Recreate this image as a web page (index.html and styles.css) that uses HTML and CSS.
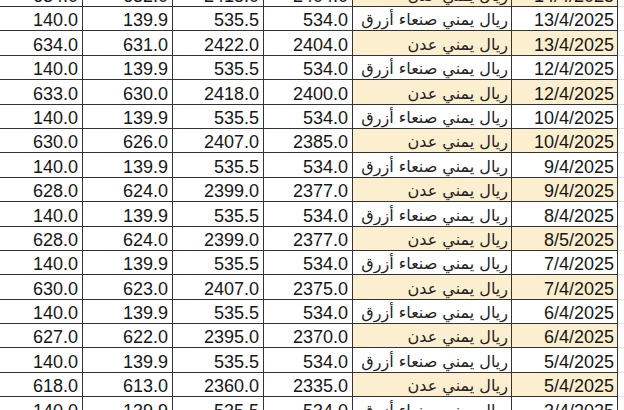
FILE: index.html
```html
<!DOCTYPE html>
<html lang="ar">
<head>
<meta charset="utf-8">
<title>أسعار الصرف</title>
<link rel="stylesheet" href="styles.css">
</head>
<body>
<table class="sheet" dir="ltr">
  <colgroup>
    <col class="c1"><col class="c2"><col class="c3"><col class="c4"><col class="c5"><col class="c6"><col class="c7">
  </colgroup>
  <tbody>
    <tr class="aden"><td>634.0</td><td>632.0</td><td>2418.0</td><td>2404.0</td><td class="cur">ريال يمني عدن</td><td class="date">14/4/2025</td><td class="empty"></td></tr>
    <tr><td>140.0</td><td>139.9</td><td>535.5</td><td>534.0</td><td class="cur">ريال يمني صنعاء أزرق</td><td class="date">13/4/2025</td><td class="empty"></td></tr>
    <tr class="aden"><td>634.0</td><td>631.0</td><td>2422.0</td><td>2404.0</td><td class="cur">ريال يمني عدن</td><td class="date">13/4/2025</td><td class="empty"></td></tr>
    <tr><td>140.0</td><td>139.9</td><td>535.5</td><td>534.0</td><td class="cur">ريال يمني صنعاء أزرق</td><td class="date">12/4/2025</td><td class="empty"></td></tr>
    <tr class="aden"><td>633.0</td><td>630.0</td><td>2418.0</td><td>2400.0</td><td class="cur">ريال يمني عدن</td><td class="date">12/4/2025</td><td class="empty"></td></tr>
    <tr><td>140.0</td><td>139.9</td><td>535.5</td><td>534.0</td><td class="cur">ريال يمني صنعاء أزرق</td><td class="date">10/4/2025</td><td class="empty"></td></tr>
    <tr class="aden"><td>630.0</td><td>626.0</td><td>2407.0</td><td>2385.0</td><td class="cur">ريال يمني عدن</td><td class="date">10/4/2025</td><td class="empty"></td></tr>
    <tr><td>140.0</td><td>139.9</td><td>535.5</td><td>534.0</td><td class="cur">ريال يمني صنعاء أزرق</td><td class="date">9/4/2025</td><td class="empty"></td></tr>
    <tr class="aden"><td>628.0</td><td>624.0</td><td>2399.0</td><td>2377.0</td><td class="cur">ريال يمني عدن</td><td class="date">9/4/2025</td><td class="empty"></td></tr>
    <tr><td>140.0</td><td>139.9</td><td>535.5</td><td>534.0</td><td class="cur">ريال يمني صنعاء أزرق</td><td class="date">8/4/2025</td><td class="empty"></td></tr>
    <tr class="aden"><td>628.0</td><td>624.0</td><td>2399.0</td><td>2377.0</td><td class="cur">ريال يمني عدن</td><td class="date">8/5/2025</td><td class="empty"></td></tr>
    <tr><td>140.0</td><td>139.9</td><td>535.5</td><td>534.0</td><td class="cur">ريال يمني صنعاء أزرق</td><td class="date">7/4/2025</td><td class="empty"></td></tr>
    <tr class="aden"><td>630.0</td><td>623.0</td><td>2407.0</td><td>2375.0</td><td class="cur">ريال يمني عدن</td><td class="date">7/4/2025</td><td class="empty"></td></tr>
    <tr><td>140.0</td><td>139.9</td><td>535.5</td><td>534.0</td><td class="cur">ريال يمني صنعاء أزرق</td><td class="date">6/4/2025</td><td class="empty"></td></tr>
    <tr class="aden"><td>627.0</td><td>622.0</td><td>2395.0</td><td>2370.0</td><td class="cur">ريال يمني عدن</td><td class="date">6/4/2025</td><td class="empty"></td></tr>
    <tr><td>140.0</td><td>139.9</td><td>535.5</td><td>534.0</td><td class="cur">ريال يمني صنعاء أزرق</td><td class="date">5/4/2025</td><td class="empty"></td></tr>
    <tr class="aden"><td>618.0</td><td>613.0</td><td>2360.0</td><td>2335.0</td><td class="cur">ريال يمني عدن</td><td class="date">5/4/2025</td><td class="empty"></td></tr>
    <tr><td>140.0</td><td>139.9</td><td>535.5</td><td>534.0</td><td class="cur">ريال يمني صنعاء أزرق</td><td class="date">3/4/2025</td><td class="empty"></td></tr>
  </tbody>
</table>
</body>
</html>
```

FILE: styles.css
```css
html, body {
  margin: 0;
  padding: 0;
  background: #ffffff;
  overflow: hidden;
  width: 624px;
  height: 410px;
}

.sheet {
  border-collapse: collapse;
  table-layout: fixed;
  width: 720px;
  margin-top: -18.4px;
  margin-left: -8px;
  font-family: "Liberation Sans", Arial, "DejaVu Sans", sans-serif;
  font-size: 18px;
  color: #161616;
}

.c1 { width: 90px; }
.c2 { width: 90px; }
.c3 { width: 91px; }
.c4 { width: 89px; }
.c5 { width: 159px; }
.c6 { width: 106px; }
.c7 { width: 95px; }

.sheet tr {
  height: 24.4px;
}

.sheet td {
  border: 1px solid #333333;
  padding: 0 4px 1px 0;
  text-align: right;
  vertical-align: bottom;
  line-height: 18px;
  white-space: nowrap;
  overflow: hidden;
}

.sheet td.cur {
  direction: rtl;
  text-align: right;
  padding: 0 3px 1px 0;
  font-family: "DejaVu Sans", sans-serif;
  font-size: 16px;
  color: #222222;
}

.sheet td.date {
  padding-right: 3px;
}

.sheet tr.aden td.cur,
.sheet tr.aden td.date {
  background: #fcefcf;
}

.sheet td.empty {
  border: 1px solid #e4e4e4;
  border-left: 1px solid #333333;
  background: #ffffff;
}
```
